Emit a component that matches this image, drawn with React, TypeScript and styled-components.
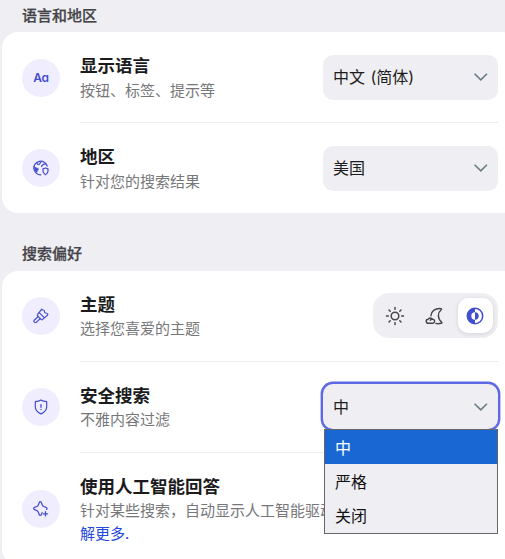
import React from 'react';
import styled, { createGlobalStyle } from 'styled-components';

const GlobalStyle = createGlobalStyle`
  * { box-sizing: border-box; }
  body {
    margin: 0;
    background: #efeef3;
    overflow: hidden;
    font-family: "Noto Sans CJK SC", "Noto Sans", sans-serif;
    color: #1b1b1d;
  }
`;

const Page = styled.main`
  height: 559px;
  padding-left: 2px;
  overflow: hidden;
`;

const SectionTitle = styled.h2<{ $height: number; $bottom: number }>`
  margin: 0;
  height: ${p => p.$height}px;
  padding: 0 0 ${p => p.$bottom}px 20px;
  display: flex;
  align-items: flex-end;
  font-size: 15px;
  line-height: 24px;
  font-weight: 500;
  color: #444448;
  -webkit-text-stroke: 0.25px currentColor;
`;

const Card = styled.section`
  width: 516px;
  padding: 0 20px;
  background: #fff;
  border-radius: 16px;
`;

const Row = styled.div<{ $height?: number }>`
  display: flex;
  align-items: center;
  height: ${p => p.$height ?? 91}px;
`;

const IconCircle = styled.div<{ $lift?: boolean }>`
  display: flex;
  align-items: center;
  justify-content: center;
  flex: none;
  width: 38px;
  height: 38px;
  margin-right: 20px;
  margin-bottom: ${p => (p.$lift ? 1 : 0)}px;
  border-radius: 50%;
  background: #f0edff;
  color: #444fcf;
`;

const RowBody = styled.div<{ $divider?: boolean; $lift?: boolean }>`
  display: flex;
  align-items: center;
  justify-content: space-between;
  width: 418px;
  height: 100%;
  padding-bottom: ${p => (p.$lift ? 1 : 0)}px;
  border-bottom: ${p => (p.$divider ? '1px solid #ededf0' : '0')};
`;

const Labels = styled.div<{ $gap: number }>`
  display: grid;
  gap: ${p => p.$gap}px;
`;

const RowTitle = styled.div`
  font-size: 17.5px;
  line-height: 24px;
  font-weight: 700;
  white-space: nowrap;
`;

const Description = styled.div`
  font-size: 15px;
  line-height: 23px;
  font-weight: 400;
  color: #77777a;
  white-space: nowrap;
`;

const Link = styled.a`
  color: #2447dc;
  display: block;
`;

const SelectWrap = styled.div`
  position: relative;
`;

const SelectBox = styled.button<{ $open?: boolean }>`
  display: flex;
  align-items: center;
  justify-content: space-between;
  width: 175px;
  height: 45px;
  padding: 0 9px 0 10px;
  border: 0;
  border-radius: 10px;
  background: #efeef3;
  color: #1d1d20;
  font: 400 16px/24px Inter, "Noto Sans CJK SC", sans-serif;
  word-spacing: 1px;
  box-shadow: ${p => (p.$open ? '0 0 0 2.4px #5f69e6' : 'none')};
`;

const Menu = styled.div`
  position: absolute;
  top: 45px;
  left: 1px;
  z-index: 2;
  width: 174px;
  border: 1px solid #65656a;
  background: #efeef3;
`;

const Option = styled.div<{ $selected?: boolean }>`
  height: 34.2px;
  padding-left: 10px;
  font-size: 16px;
  line-height: 35px;
  background: ${p => (p.$selected ? '#1967d2' : 'transparent')};
  color: ${p => (p.$selected ? '#fff' : '#111')};
`;

const ThemeSwitch = styled.div`
  display: flex;
  align-items: center;
  justify-content: space-between;
  width: 125px;
  height: 45px;
  padding: 5px;
  border-radius: 16px;
  background: #efeef3;
  color: #46464a;
`;

const ThemeButton = styled.button<{ $active?: boolean }>`
  display: flex;
  align-items: center;
  justify-content: center;
  width: 35px;
  height: 35px;
  padding: 0 1px 0 0;
  border: 0;
  border-radius: 10px;
  background: ${p => (p.$active ? '#fff' : 'transparent')};
  color: ${p => (p.$active ? '#444fcf' : 'inherit')};
  box-shadow: ${p => (p.$active ? '0 1px 4px rgba(0,0,0,.12)' : 'none')};
`;

const Letters = styled.span`
  font: 600 12px/16px Inter, sans-serif;
  font-feature-settings: "cv11" 1;
  letter-spacing: -0.3px;
`;

const Stroke = ({ children, size, width = 1.3 }: { children: React.ReactNode; size: number; width?: number }) => (
  <svg width={size} height={size} viewBox={`0 0 ${size} ${size}`} fill="none" stroke="currentColor" strokeWidth={width} strokeLinecap="round" strokeLinejoin="round">
    {children}
  </svg>
);

const Chevron = () => (
  <svg width="16" height="10" viewBox="0 0 16 10" fill="none" stroke="#697b84" strokeWidth="1.6">
    <path d="M1.6 1.7 7.8 7.9l6.2-6.2" />
  </svg>
);

const GlobeIcon = () => (
  <Stroke size={16} width={1.25}>
    <path d="M7.8 14.8A6.8 6.8 0 1 1 14.2 6.2" />
    <path d="M1.2 6.8c1.8.2 2.2 1.3 3.4 1.4.9 0 1.2.8.8 1.5-.5.8-1.2 1-1.2 2.3l-.3.8C2.2 11.6 1.2 9.3 1.2 6.8Z" fill="currentColor" strokeWidth=".3" />
    <path d="M4 2.5c.2 1.5.7 2.2 1.7 2 1.4-.3.9-1.6 2.1-2.1M12.7 4.2c-1.2-.3-2.3-.4-3 .7-.3.7-1.2.7-1.1 1.6" />
    <path d="m12.5 8 2.5.9v2.2c0 1.7-.9 2.9-2.5 3.7-1.6-.8-2.5-2-2.5-3.7V8.9z" />
  </Stroke>
);

const BrushIcon = () => (
  <Stroke size={16} width={1.2}>
    <path d="M8.7 1.2c.6 1.5 1.5.3 2.4 1.2s-.2 1.8.9 2.3 1.8.2 2.6 1.2c.4.5.3.9-.1 1.3L9.6 11.4c-.5.5-1 .5-1.5 0L4.6 7.8c-.5-.5-.5-1 0-1.5z" />
    <path d="m6.2 4.7 5 5" />
    <path d="m5.3 8.5-3.9 3.5a1.500 1.500 0 1 0 2.200 2.200l3.700-3.700" />
  </Stroke>
);

const ShieldIcon = () => (
  <Stroke size={16} width={1.2}>
    <path d="M8 1.1c1.7 1.2 3.6 1.5 5.7 1.6v5c0 3.3-2.1 5.5-5.7 7.2-3.6-1.7-5.7-3.9-5.7-7.2v-5C4.4 2.6 6.3 2.3 8 1.1Z" />
    <path d="M8 5.6v2.7M8 10.5v.1" strokeWidth="1.3" />
  </Stroke>
);

const SparkleIcon = () => (
  <Stroke size={16} width={1.25}>
    <path d="M9.1 11.7 8.4 13.500c-.5 1.300-1.700 1.300-2.200 0L5.300 11.100c-.3-.8-.7-1.200-1.500-1.500L1.600 8.700c-1.300-.5-1.300-1.800 0-2.300l2.200-.9c.8-.3 1.200-.7 1.500-1.500l.9-2.300c.5-1.300 1.700-1.300 2.200 0L9.300 4c.3.8.7 1.200 1.500 1.500l2.200.9c1.100.4 1.300 1.400.6 2" />
    <path d="M12.500 10.700v4.200M10.400 12.800h4.200" strokeWidth="1.3" />
  </Stroke>
);

const SunIcon = () => (
  <Stroke size={20} width={1.5}>
    <circle cx="10" cy="10" r="3.8" />
    <path d="M10 1.500v1.800M10 16.700v1.800M1.500 10h1.800M16.700 10h1.800M4 4l1.200 1.200M14.800 14.800l1.200 1.200M4 16l1.200-1.200M14.800 5.200l1.200-1.200" />
  </Stroke>
);

const MoonIcon = () => (
  <Stroke size={20} width={1.4}>
    <path d="M5.9 9.800C6.100 5.200 9.800 2.200 15.800 2.600c.9.100 1.100.6.4 1.100-3.600 2.900-4 8.300.3 12.200.6.6.5 1.200-.3 1.400-2 .5-3.800.5-5.300.1" />
    <path d="M3.600 17.300c-3 0-3.200-3.700-.4-4 .8-1.800 3.400-1.700 4.100 0 2.900-.4 3.100 4 .2 4z" />
    <path d="M5.200 14.200c.3-.6 1-.9 2-.9" />
  </Stroke>
);

const ContrastIcon = () => (
  <svg width="18" height="18" viewBox="0 0 18 18" fill="none">
    <circle cx="9" cy="9" r="7.7" stroke="currentColor" strokeWidth="1.5" />
    <path d="M9 1.300a7.700 7.700 0 0 0 0 15.400V12.700a3.700 3.700 0 0 1 0-7.400z" fill="currentColor" />
    <path d="M9 5.300a3.700 3.700 0 0 1 0 7.400z" fill="currentColor" />
  </svg>
);

interface SettingProps {
  icon: React.ReactNode;
  title: string;
  description: React.ReactNode;
  children?: React.ReactNode;
  divider?: boolean;
  lift?: boolean;
  gap?: number;
  height?: number;
}

const Setting = ({ icon, title, description, children, divider, lift, gap = 0, height }: SettingProps) => (
  <Row $height={height}>
    <IconCircle $lift={lift}>{icon}</IconCircle>
    <RowBody $divider={divider} $lift={lift}>
      <Labels $gap={gap}>
        <RowTitle>{title}</RowTitle>
        <Description>{description}</Description>
      </Labels>
      {children}
    </RowBody>
  </Row>
);

export default function App() {
  return (
    <>
      <GlobalStyle />
      <Page>
        <SectionTitle $height={32} $bottom={5}>语言和地区</SectionTitle>
        <Card>
          <Setting icon={<Letters>Aa</Letters>} title="显示语言" description="按钮、标签、提示等" divider gap={1}>
            <SelectBox><span>中文 (简体)</span><Chevron /></SelectBox>
          </Setting>
          <Setting icon={<GlobeIcon />} title="地区" description="针对您的搜索结果" height={90} gap={1}>
            <SelectBox><span>美国</span><Chevron /></SelectBox>
          </Setting>
        </Card>
        <SectionTitle $height={58} $bottom={6}>搜索偏好</SectionTitle>
        <Card>
          <Setting icon={<BrushIcon />} title="主题" description="选择您喜爱的主题" divider lift>
            <ThemeSwitch>
              <ThemeButton><SunIcon /></ThemeButton>
              <ThemeButton><MoonIcon /></ThemeButton>
              <ThemeButton $active><ContrastIcon /></ThemeButton>
            </ThemeSwitch>
          </Setting>
          <Setting icon={<ShieldIcon />} title="安全搜索" description="不雅内容过滤" divider lift>
            <SelectWrap>
              <SelectBox $open><span>中</span><Chevron /></SelectBox>
              <Menu>
                <Option $selected>中</Option>
                <Option>严格</Option>
                <Option>关闭</Option>
              </Menu>
            </SelectWrap>
          </Setting>
          <Setting
            icon={<SparkleIcon />}
            title="使用人工智能回答"
            description={<>针对某些搜索，自动显示人工智能驱动的答案。<Link>解更多.</Link></>}
            height={112}
          />
        </Card>
      </Page>
    </>
  );
}
